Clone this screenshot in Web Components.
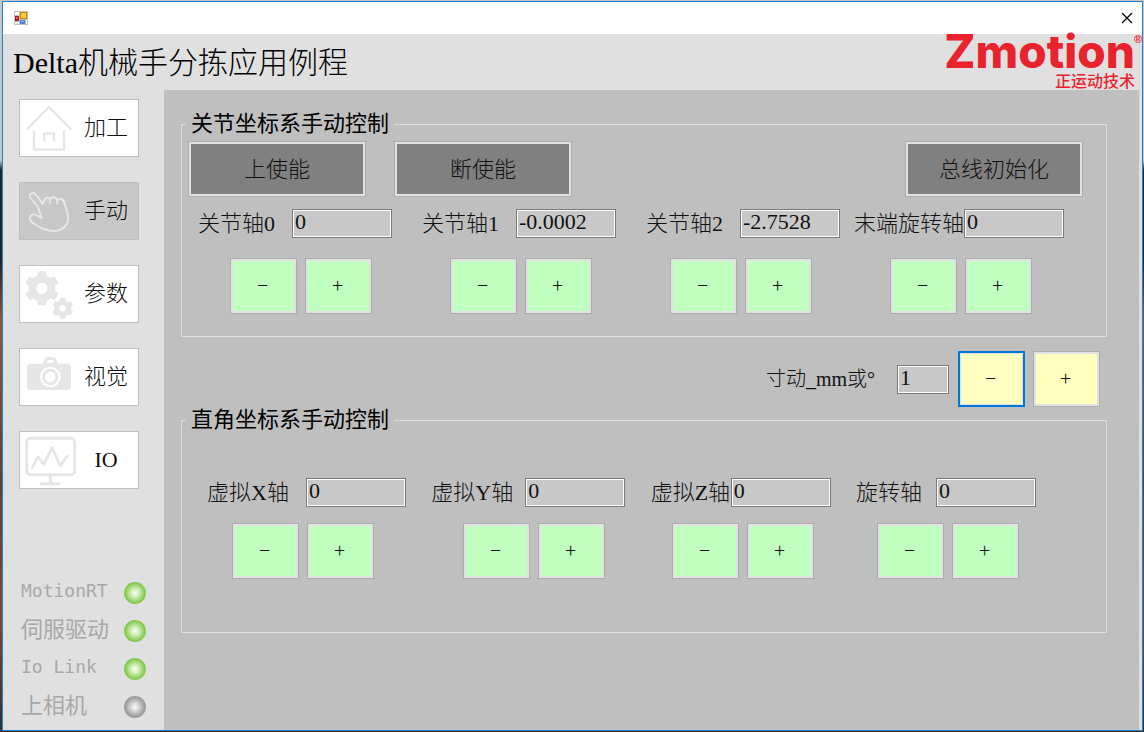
<!DOCTYPE html>
<html lang="zh-CN">
<head>
<meta charset="utf-8">
<title>Delta机械手分拣应用例程</title>
<style>
  body {
    margin: 0;
    font-family: "Liberation Serif", "Noto Sans CJK SC", serif;
    font-size: 22px;
    font-weight: 300;
    color: #111;
    background: linear-gradient(#c9c6c3 0, #c9c6c3 160px, #2a2320 170px, #2a2320 260px, #8a5a40 320px, #5c4234 480px, #7a4a35 620px, #33302e 100%);
  }
</style>
</head>
<body>
<app-window>
  <brand-logo slot="logo"></brand-logo>
  <nav-item slot="nav" label="加工" icon="home"></nav-item>
  <nav-item slot="nav" label="手动" icon="hand" active></nav-item>
  <nav-item slot="nav" label="参数" icon="gears"></nav-item>
  <nav-item slot="nav" label="视觉" icon="camera"></nav-item>
  <nav-item slot="nav" label="IO" icon="monitor"></nav-item>
  <status-light slot="status" latin on>MotionRT</status-light>
  <status-light slot="status" on>伺服驱动</status-light>
  <status-light slot="status" latin on>Io Link</status-light>
  <status-light slot="status">上相机</status-light>
  <joint-panel></joint-panel>
  <step-panel></step-panel>
  <cartesian-panel></cartesian-panel>
</app-window>

<script>
const define = (name, html, setup) => {
  const tpl = document.createElement('template');
  tpl.innerHTML = html;
  customElements.define(name, class extends HTMLElement {
    constructor() {
      super();
      this.attachShadow({ mode: 'open' }).append(tpl.content.cloneNode(true));
    }
    connectedCallback() {
      if (setup) setup(this, this.shadowRoot);
    }
  });
};

const ICONS = {
  home: `<svg viewBox="60 30 174 168"><g fill="none" stroke="#e6e6e6" stroke-width="7" stroke-linecap="round" stroke-linejoin="round">
    <path d="M82 117L147 51L212 117"/><path d="M102 123V179H192V123"/><path d="M133 151V130H162V151"/></g></svg>`,
  hand: `<svg viewBox="60 279 174 168"><path fill="none" stroke="#e6e6e6" stroke-width="6" stroke-linecap="round" stroke-linejoin="round"
    d="M126 384L106 374C92 369 84 386 94 395C116 412 142 423 163 423C183 422 195 411 200 402C207 390 205 378 202 366L193 339C191 326 176 322 172 332C171 321 154 318 150 329C146 321 133 321 131 337L128 342C120 329 113 319 107 314C99 303 84 314 91 324C98 333 109 341 114 352C119 362 121 375 126 384ZM150 329V338M172 332V341"/></svg>`,
  gears: `<svg viewBox="60 48 174 168"><defs><g id="g">
    <rect x="-13" y="-51" width="26" height="102" rx="6"/><rect x="-13" y="-51" width="26" height="102" rx="6" transform="rotate(60)"/>
    <rect x="-13" y="-51" width="26" height="102" rx="6" transform="rotate(120)"/><circle r="40"/></g></defs>
    <g fill="#e6e6e6"><use href="#g" x="126" y="115"/><use href="#g" transform="translate(188 175) scale(.62)"/></g>
    <g fill="#fff"><circle cx="126" cy="115" r="17"/><circle cx="188" cy="175" r="10"/></g></svg>`,
  camera: `<svg viewBox="60 297 174 168"><path fill="#e6e6e6" d="M92 341H128L133 329Q137 321 145 321H158Q166 321 169 329L174 341H202Q213 342 213 353V408Q213 420 202 420H92Q81 420 81 408V353Q81 342 92 341Z"/>
    <rect x="142" y="330" width="19" height="9" rx="3" fill="#fff"/><circle cx="151" cy="381" r="31" fill="#fff"/>
    <circle cx="151" cy="381" r="20" fill="none" stroke="#e6e6e6" stroke-width="9"/></svg>`,
  monitor: `<svg viewBox="60 546 174 168"><g fill="none" stroke="#e6e6e6" stroke-width="9" stroke-linecap="round" stroke-linejoin="round">
    <rect x="80" y="565" width="144" height="109" rx="12"/><path d="M151 676V698M124 701H178"/>
    <path stroke-width="8" d="M97 652L115 620L131 644L156 593L181 648L201 619"/></g></svg>`
};

define('brand-logo', `
  <style>
    :host { display: block; position: relative; color: #e8232d; text-align: right; }
    b { display: block; font: 800 46px/34px Inter, sans-serif; }
    span { display: block; font: 500 16px/24px "Noto Sans CJK SC", sans-serif; }
    sup { position: absolute; right: -7px; top: 0; font: 700 11px/10px "Liberation Sans", sans-serif; }
  </style>
  <b>Zmotion</b><sup>®</sup><span>正运动技术</span>`);

define('nav-item', `
  <style>
    :host { display: block; }
    button { display: flex; align-items: center; width: 100%; height: 58px; padding: 0; border: 1px solid #bfbfbf;
      background: #fff; font: inherit; color: inherit; }
    :host([active]) button { background: #c8c8c8; }
    svg { width: 58px; height: 56px; flex: none; }
    .text { flex: 1; text-align: center; padding-right: 4px; line-height: 28px; }
    .icon { display: flex; }
  </style>
  <button type="button"><span class="icon"></span><span class="text"></span></button>`, (host, root) => {
  root.querySelector('.icon').innerHTML = ICONS[host.getAttribute('icon')];
  root.querySelector('.text').textContent = host.getAttribute('label');
});

define('status-light', `
  <style>
    :host { display: flex; align-items: center; justify-content: space-between; height: 38px; color: #a8a8a8;
      font-family: "Noto Sans CJK SC", sans-serif; font-weight: 400; }
    :host([latin]) { font-family: "DejaVu Sans Mono", monospace; font-size: 18px; }
    span { line-height: 24px; padding-bottom: 8px; }
    :host([latin]) span { padding-bottom: 4px; }
    i { width: 22px; height: 22px; border-radius: 50%; background: radial-gradient(circle, #fff 0, #d0d0d0 30%, #999 65%, #b8b8b8 100%); }
    :host([on]) i { background: radial-gradient(circle, #fff 0, #c9eaae 30%, #82c94c 65%, #a4d480 100%); }
  </style>
  <span><slot></slot></span><i></i>`);

define('action-button', `
  <style>
    :host { display: block; flex: none; width: 178px; }
    button { display: block; width: 100%; height: 56px; padding: 0 0 4px; border: 1px solid #adadad; box-shadow: inset 0 0 0 2px #e1e1e1;
      background: #808080; font: inherit; color: inherit; }
    :host([tone]) { width: 67px; }
    :host([tone]) button { font-family: "Noto Sans CJK SC", sans-serif; font-size: 20px; padding: 0 2px 4px 0; }
    :host([tone=green]) button { background: #c0ffc0; }
    :host([tone=yellow]) button { background: #ffffc0; }
    :host([focused]) button { border: 2px solid #0078d7; box-shadow: inset 0 0 0 1px #e1e1e1; }
  </style>
  <button type="button"><slot></slot></button>`);

define('jog-pair', `
  <style>:host { display: flex; gap: 8px; width: 142px; }</style>
  <action-button class="minus">−</action-button><action-button class="plus">+</action-button>`, (host, root) => {
  for (const b of root.querySelectorAll('action-button')) b.setAttribute('tone', host.getAttribute('tone') || 'green');
  root.querySelector('.minus').toggleAttribute('focused', host.hasAttribute('focused'));
});

define('axis-field', `
  <style>
    :host { display: flex; align-items: center; height: 29px; }
    label { min-width: var(--label, 94px); white-space: nowrap; line-height: 28px; }
    input { box-sizing: border-box; width: var(--box, 100px); height: 29px; margin: 0; padding: 0 2px 3px; border: 1px solid #7a7a7a;
      border-radius: 0; outline: 0; box-shadow: inset 0 0 0 1px #fff; background: #c8c8c8; font: inherit; font-size: 22px; color: inherit; }
  </style>
  <label for="v"></label><input id="v" type="text">`, (host, root) => {
  root.querySelector('label').textContent = host.getAttribute('label');
  root.querySelector('input').value = host.getAttribute('value');
});

define('group-box', `
  <style>
    :host { display: block; }
    fieldset { margin: 0; padding: 0; border: 1px solid #dcdcdc; min-width: 0; }
    legend { margin-left: 4px; padding: 0 5px; line-height: 24px; font-weight: 400; color: #000; }
  </style>
  <fieldset><legend><slot name="title"></slot></legend><slot></slot></fieldset>`);

define('joint-panel', `
  <style>
    :host { display: block; }
    .power { display: flex; gap: 28px; padding: 5px 23px 12px 6px; }
    .power > :last-child { margin-left: auto; }
    .fields { display: grid; grid-template-columns: 194fr 224fr 224fr 224fr; justify-items: end; padding: 0 42px 20px 16px; }
    .jogs { display: flex; justify-content: space-between; padding: 0 74px 22px 48px; }
  </style>
  <group-box>
    <span slot="title">关节坐标系手动控制</span>
    <div class="power"><action-button>上使能</action-button><action-button>断使能</action-button><action-button>总线初始化</action-button></div>
    <div class="fields">
      <axis-field label="关节轴0" value="0"></axis-field><axis-field label="关节轴1" value="-0.0002"></axis-field>
      <axis-field label="关节轴2" value="-2.7528"></axis-field><axis-field label="末端旋转轴" value="0"></axis-field>
    </div>
    <div class="jogs"><jog-pair></jog-pair><jog-pair></jog-pair><jog-pair></jog-pair><jog-pair></jog-pair></div>
  </group-box>`);

define('step-panel', `
  <style>
    :host { display: flex; align-items: center; justify-content: flex-end; gap: 9px; padding: 14px 7px 1px; }
    axis-field { --label: 131px; --box: 52px; font-size: 20px; }
  </style>
  <axis-field label="寸动_mm或°" value="1"></axis-field><jog-pair tone="yellow" focused></jog-pair>`);

define('cartesian-panel', `
  <style>
    :host { display: block; }
    .fields { display: flex; justify-content: space-between; padding: 46px 70px 16px 25px; }
    .x { --label: 99px; }
    .z, .r { --label: 80px; }
    .jogs { display: grid; grid-template-columns: 231fr 209fr 205fr 142fr; padding: 0 87px 53px 50px; }
  </style>
  <group-box>
    <span slot="title">直角坐标系手动控制</span>
    <div class="fields">
      <axis-field class="x" label="虚拟X轴" value="0"></axis-field><axis-field label="虚拟Y轴" value="0"></axis-field>
      <axis-field class="z" label="虚拟Z轴" value="0"></axis-field><axis-field class="r" label="旋转轴" value="0"></axis-field>
    </div>
    <div class="jogs"><jog-pair></jog-pair><jog-pair></jog-pair><jog-pair></jog-pair><jog-pair></jog-pair></div>
  </group-box>`);

define('app-window', `
  <style>
    :host { display: flex; box-sizing: border-box; min-height: 100vh; padding: 1px 1px 1px 2px; }
    .frame { flex: 1; display: flex; flex-direction: column; border: 1px solid #1883d7; background: #e0e0e0; }
    .bar { display: flex; align-items: center; justify-content: space-between; height: 32px; padding: 0 9px 0 11px; background: #fff; }
    .bar svg { display: block; }
    .close { padding: 0; border: 0; background: none; }
    header { display: flex; justify-content: space-between; height: 56px; padding: 0 7px 0 10px; }
    h1 { margin: 0; font-size: 30px; line-height: 58px; font-weight: 300; color: #000; }
    .body { flex: 1; display: flex; padding-right: 3px; }
    aside { box-sizing: border-box; width: 161px; flex: none; display: flex; flex-direction: column; padding: 9px 18px 4px; }
    nav { display: flex; flex-direction: column; gap: 25px; margin: 0 7px 0 -2px; }
    .status { margin-top: auto; }
    main { flex: 1; min-width: 0; padding: 22px 32px 22px 17px; background: #bfbfbf; }
  </style>
  <div class="frame">
    <div class="bar">
      <svg width="14" height="14" viewBox="0 0 14 14"><path fill="#c0c0c0" d="M0 0h14v14H0z"/><path fill="#fff" d="M1 1h4v3H1zM1 11h2v2H1zM4 11h1v2H4zM12 9h1v4h-1z"/>
        <path fill="#a02020" d="M1 5h4v5H1z"/><path fill="#d86060" d="M2 6h2v2H2z"/><path fill="#b88a10" d="M6 1h7v7H6z"/><path fill="#ffc928" d="M7 2h5v5H7z"/><path fill="#4a7fd8" d="M6 9h5v4H6z"/><path fill="#8ab8ff" d="M7 10h3v1H7z"/></svg>
      <button class="close" type="button" aria-label="关闭"><svg width="12" height="12" viewBox="0 0 12 12"><path d="M1 1L11 11M11 1L1 11" stroke="#000" stroke-width="1.2"/></svg></button>
    </div>
    <header><h1>Delta机械手分拣应用例程</h1><slot name="logo"></slot></header>
    <div class="body">
      <aside><nav><slot name="nav"></slot></nav><div class="status"><slot name="status"></slot></div></aside>
      <main><slot></slot></main>
    </div>
  </div>`);
</script>
</body>
</html>
